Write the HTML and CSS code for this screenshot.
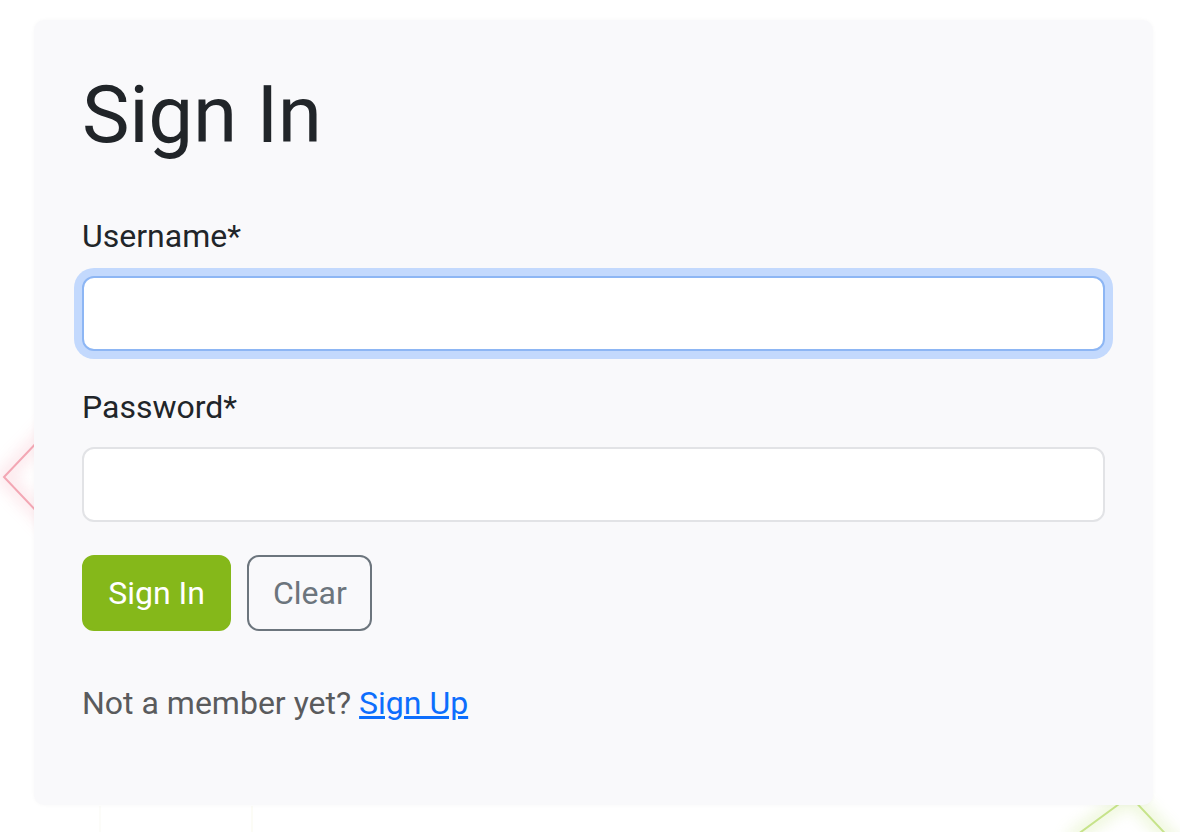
FILE: index.html
```html
<!DOCTYPE html>
<html lang="en">
<head>
<meta charset="utf-8">
<title>Sign In</title>
<link rel="stylesheet" href="styles.css">
</head>
<body>
<svg class="deco" width="1180" height="832" viewBox="0 0 1180 832" aria-hidden="true">
  <defs>
    <filter id="glow" x="-50%" y="-50%" width="200%" height="200%">
      <feGaussianBlur stdDeviation="8"/>
    </filter>
  </defs>
  <g filter="url(#glow)" opacity="0.35">
    <polyline points="60,418 4,477 60,536" fill="none" stroke="#f5a3b3" stroke-width="10"/>
    <polyline points="1070,840 1130,796 1190,860" fill="none" stroke="#b9dd6a" stroke-width="10"/>
  </g>
  <polyline points="60,418 4,477 60,536" fill="none" stroke="#f3a7b4" stroke-width="2"/>
  <polyline points="1070,840 1130,796 1190,860" fill="none" stroke="#c6e38a" stroke-width="2"/>
  <line x1="100" y1="806" x2="100" y2="832" stroke="#fcfcf9" stroke-width="2"/>
  <line x1="252" y1="806" x2="252" y2="832" stroke="#fcfcf6" stroke-width="2"/>
</svg>
<main class="card">
  <h1 class="title">Sign In</h1>
  <form class="form">
    <div class="field">
      <label class="label" for="username">Username*</label>
      <input class="input input-focus" id="username" type="text">
    </div>
    <div class="field">
      <label class="label" for="password">Password*</label>
      <input class="input" id="password" type="password">
    </div>
    <div class="actions">
      <button class="btn btn-primary" type="submit">Sign In</button>
      <button class="btn btn-outline" type="reset">Clear</button>
    </div>
  </form>
  <p class="note">Not a member yet? <a class="link" href="#">Sign Up</a></p>
</main>
</body>
</html>
```
FILE: styles.css
```css
html, body {
  margin: 0;
  background: #ffffff;
}
body {
  position: relative;
  width: 1180px;
  height: 832px;
  overflow: hidden;
  padding: 20px 27px 0 34px;
  box-sizing: border-box;
  font-family: Roboto, "Liberation Sans", sans-serif;
  color: #212529;
}
.deco {
  position: absolute;
  left: 0;
  top: 0;
  z-index: 0;
}
.card {
  position: relative;
  z-index: 1;
  height: 785px;
  box-sizing: border-box;
  background: #f9f9fb;
  border-radius: 10px;
  box-shadow: 0 0 4px rgba(0, 0, 0, 0.03);
  padding: 47px 48px 48px 48px;
}
.title {
  margin: 0 0 49px 0;
  font-size: 80px;
  line-height: 96px;
  font-weight: 400;
  letter-spacing: -0.3px;
  color: #212529;
}
.form {
  display: flex;
  flex-direction: column;
}
.field {
  display: flex;
  flex-direction: column;
  margin-bottom: 32px;
}
.label {
  font-size: 32px;
  line-height: 48px;
  margin-bottom: 16px;
  color: #212529;
}
.input {
  height: 75px;
  box-sizing: border-box;
  border: 2px solid #e2e3e6;
  border-radius: 12px;
  background: #ffffff;
  font: inherit;
  font-size: 32px;
  padding: 0 24px;
  outline: none;
}
.input-focus {
  border-color: #8db6f4;
  box-shadow: 0 0 0 8px #c3d9fd;
}
.actions {
  display: flex;
  gap: 16px;
  margin-top: 1px;
}
.btn {
  height: 76px;
  box-sizing: border-box;
  border-radius: 12px;
  font-family: Roboto, "Liberation Sans", sans-serif;
  font-size: 32px;
  padding: 0 24px;
  cursor: pointer;
}
.btn-primary {
  width: 149px;
  background: #85b81a;
  color: #ffffff;
  border: 2px solid #85b81a;
}
.btn-outline {
  width: 125px;
  background: transparent;
  color: #6c757d;
  border: 2px solid #6c757d;
}
.note {
  margin: 48px 0 0 0;
  font-size: 32px;
  line-height: 48px;
  color: #5a5b5d;
}
.link {
  color: #0d6efd;
  text-decoration: underline;
}
```
